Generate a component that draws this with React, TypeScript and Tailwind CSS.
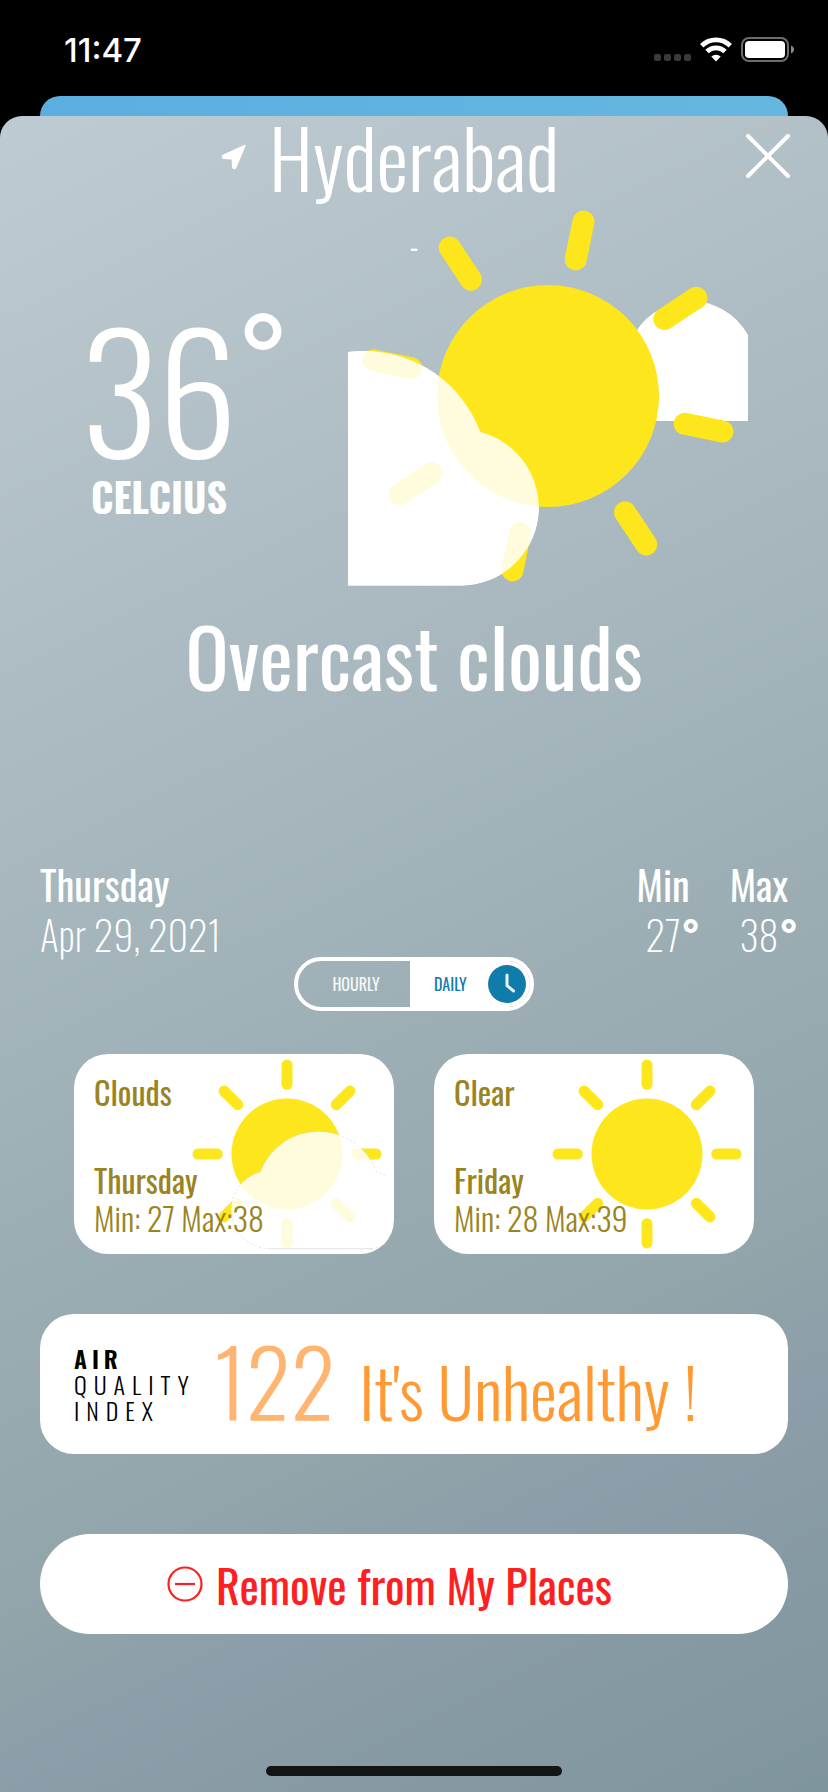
import { useState } from "react";

type Forecast = {
  condition: string;
  day: string;
  min: number;
  max: number;
  cloudy: boolean;
};

const forecasts: Forecast[] = [
  { condition: "Clouds", day: "Thursday", min: 27, max: 38, cloudy: true },
  { condition: "Clear", day: "Friday", min: 28, max: 39, cloudy: false },
];

const RAY_ANGLES = [0, 45, 90, 135, 180, 225, 270, 315];
const CLOUD_TOP = "M166 389.500A78 78 0 0 1 146.700 236A124 124 0 0 1 379.300 236A78 78 0 0 1 361 389.500";
const CLOUD = CLOUD_TOP + "Z";

function Sun({ tilt = 0 }: { tilt?: number }) {
  return (
    <g fill="#fde61b" stroke="#fde61b" transform={`rotate(${tilt} 200 200)`}>
      <circle cx="200" cy="200" r="111" stroke="none" />
      {RAY_ANGLES.map((angle) => (
        <line
          key={angle}
          x1="200"
          y1="60.500"
          x2="200"
          y2="22"
          strokeWidth="22"
          strokeLinecap="round"
          transform={`rotate(${angle} 200 200)`}
        />
      ))}
    </g>
  );
}

function OvercastPicture() {
  return (
    <svg viewBox="0 0 400 400" className="size-[400px] shrink-0" role="img" aria-label="Overcast clouds">
      <path d="M290 225L283 145A65 65 0 0 1 400 139V225Z" fill="#fff" />
      <path d={CLOUD} transform="translate(-247 0)" fill="#fff" />
      <Sun tilt={11.5} />
      <path d={CLOUD} transform="translate(-247 0)" fill="#fff" fillOpacity="0.86" />
    </svg>
  );
}

function ForecastPicture({ cloudy }: { cloudy: boolean }) {
  return (
    <svg viewBox="0 0 400 400" className="absolute top-0 right-[7px] size-[200px]" aria-hidden="true">
      <Sun />
      {cloudy && (
        <>
          <path d={CLOUD} fill="#fff" fillOpacity="0.86" />
          <path d={CLOUD_TOP} fill="none" stroke="#c9cdd0" strokeWidth="1" strokeDasharray="5 4" />
          <path d="M166 389.500H372" stroke="#d5d8da" strokeWidth="1.500" />
        </>
      )}
    </svg>
  );
}

function StatusBar() {
  return (
    <div className="flex h-24 items-start justify-between pt-[34px] pr-[34px] pl-16 text-white">
      <span className="font-[Inter,sans-serif] text-[33px] leading-8 font-medium">11:47</span>
      <div className="flex items-center gap-[9px] pt-[3px]">
        <div className="flex gap-[3px] self-end pb-px">
          <i className="size-[7px] rounded-xs bg-[#3a3a3a]" />
          <i className="size-[7px] rounded-xs bg-[#3a3a3a]" />
          <i className="size-[7px] rounded-xs bg-[#3a3a3a]" />
          <i className="size-[7px] rounded-xs bg-[#3a3a3a]" />
        </div>
        <svg viewBox="0 0 32 25" className="h-[25px] w-8" fill="none" stroke="#fff" aria-hidden="true">
          <path d="M1.700 8.700A20.500 20.500 0 0 1 30.300 8.700" strokeWidth="4.800" />
          <path d="M7 14.500A12.800 12.800 0 0 1 25 14.500" strokeWidth="4.800" />
          <path d="M16 24.500L11.300 19.600A6.700 6.700 0 0 1 20.700 19.600Z" fill="#fff" stroke="none" />
        </svg>
        <svg viewBox="0 0 53 25" className="h-[25px] w-[53px]" aria-hidden="true">
          <rect x="1" y="1" width="46" height="23" rx="7" fill="none" stroke="#6d6d6d" strokeWidth="2" />
          <rect x="4" y="4" width="40" height="17" rx="4" fill="#fff" />
          <path d="M50 8.500C54 10 54 15 50 16.500Z" fill="#8a8a8a" />
        </svg>
      </div>
    </div>
  );
}

function Extreme({ label, value }: { label: string; value: number }) {
  return (
    <div className="text-center">
      <dt>{label}</dt>
      <dd className="relative mx-auto w-fit font-extralight">
        {value}
        <span className="absolute top-0 left-full pl-px font-[Inter,sans-serif] font-bold">°</span>
      </dd>
    </div>
  );
}

function ModeSwitch() {
  const [mode, setMode] = useState("daily");
  return (
    <div className="mx-auto flex h-[54px] w-60 overflow-hidden rounded-full border-4 border-white text-base">
      <button
        type="button"
        aria-pressed={mode === "hourly"}
        onClick={() => setMode("hourly")}
        className="w-28 pl-1 text-center font-normal text-white/90"
      >
        HOURLY
      </button>
      <button
        type="button"
        aria-pressed={mode === "daily"}
        onClick={() => setMode("daily")}
        className="flex flex-1 items-center justify-between bg-white pr-1 pl-6 text-[#0f7cab]"
      >
        DAILY
        <svg viewBox="0 0 38 38" className="size-[38px]" aria-hidden="true">
          <circle cx="19" cy="19" r="19" fill="#0f7cab" />
          <path d="M19 10V20.500L25.500 26" fill="none" stroke="#e6f3f9" strokeWidth="3" strokeLinecap="round" strokeLinejoin="round" />
        </svg>
      </button>
    </div>
  );
}

function ForecastCard({ condition, day, min, max, cloudy }: Forecast) {
  return (
    <li className="relative flex h-[200px] w-80 flex-col overflow-hidden rounded-[34px] bg-white px-5 pt-[19px] pb-[17px] text-[32px] leading-[38px] text-[#9a841f]">
      <ForecastPicture cloudy={cloudy} />
      <h3 className="relative">{condition}</h3>
      <p className="relative mt-auto">{day}</p>
      <p className="relative font-light">
        Min: {min} Max:{max}
      </p>
    </li>
  );
}

export default function App() {
  return (
    <div className="flex min-h-screen flex-col bg-black font-[Oswald,'Roboto_Condensed',sans-serif]">
      <StatusBar />
      <div className="mx-10 h-5 rounded-t-[20px] bg-linear-to-r from-[#5aafe0] to-[#66b7e0]" />
      <main className="relative -mt-5 flex grow flex-col pt-5">
        <div className="flex grow flex-col rounded-t-[22px] bg-[linear-gradient(154deg,#bfcbd2_0%,#91a5aa_72%,#8c9ea9_80%,#7f959d_100%)] text-white">
          <header className="grid grid-cols-[1fr_auto_1fr]">
            <svg viewBox="0 0 26 26" className="mt-7 mr-[22px] size-[26px] justify-self-end" aria-hidden="true">
              <path
                d="M24 1.500L2 11.500Q0.500 13.500 2.500 14.200L11.300 14.700L11.800 23.500Q12.500 25.500 14.500 24Z"
                fill="#fff"
                stroke="#fff"
                strokeWidth="1.500"
                strokeLinejoin="round"
              />
            </svg>
            <h1 className="text-[80px] leading-[80px] font-light">Hyderabad</h1>
            <button type="button" aria-label="Close" className="mt-[18px] mr-[38px] size-11 justify-self-end">
              <svg viewBox="0 0 44 44" className="size-11" stroke="#fff" strokeWidth="4" strokeLinecap="round" aria-hidden="true">
                <path d="M2 2L42 42M42 2L2 42" />
              </svg>
            </button>
          </header>

          <section className="relative flex justify-between px-20">
            <p className="absolute inset-x-0 top-[38px] text-center text-[28px] leading-6 font-normal">-</p>
            <div className="mt-[110px] w-[158px] text-center">
              <p className="relative mx-auto w-fit text-[160px] leading-[160px] font-light">
                36
                <span className="absolute top-0 left-full font-[Inter,sans-serif] text-[112px] leading-[96px] font-normal">
                  °
                </span>
              </p>
              <p className="mt-2.5 text-[40px] leading-10 font-bold">CELCIUS</p>
            </div>
            <OvercastPicture />
          </section>

          <h2 className="mt-[19px] text-center text-[80px] leading-[80px] font-normal">Overcast clouds</h2>

          <section className="mx-10 mt-[164px] -mb-0.5 flex justify-between text-[40px] leading-[50px]">
            <div>
              <p>Thursday</p>
              <p className="font-extralight">Apr 29, 2021</p>
            </div>
            <dl className="flex gap-10">
              <Extreme label="Min" value={27} />
              <Extreme label="Max" value={38} />
            </dl>
          </section>

          <ModeSwitch />

          <ul className="mt-[43px] flex justify-center gap-10">
            {forecasts.map((forecast) => (
              <ForecastCard key={forecast.day} {...forecast} />
            ))}
          </ul>

          <section className="mx-10 mt-[60px] flex h-[140px] rounded-[34px] bg-white pb-[17px] pl-[34px] [align-items:last_baseline]">
            <p className="w-[140px] text-2xl leading-[26px] font-light tracking-[7px] text-black">
              <strong className="block font-semibold tracking-[5px]">AIR</strong>
              QUALITY
              <br />
              INDEX
            </p>
            <p className="text-[92px] leading-[92px] font-light text-[#ffb570]">122</p>
            <p className="pl-6 text-[68px] leading-[92px] font-light text-[#ff9933]">It's Unhealthy !</p>
          </section>

          <button
            type="button"
            className="mx-10 mt-20 grid h-[100px] grid-cols-[1fr_auto_1fr] items-center rounded-full bg-white text-[46px] font-normal text-[#fe2020]"
          >
            <svg viewBox="0 0 36 36" className="mr-[13px] size-9 justify-self-end" fill="none" stroke="currentColor" strokeWidth="2.200" aria-hidden="true">
              <circle cx="18" cy="18" r="16.500" />
              <path d="M8 18H28" />
            </svg>
            Remove from My Places
          </button>

          <div className="mx-auto mt-auto mb-4 h-2.5 w-[296px] rounded-full bg-[#141414]" />
        </div>
      </main>
    </div>
  );
}
